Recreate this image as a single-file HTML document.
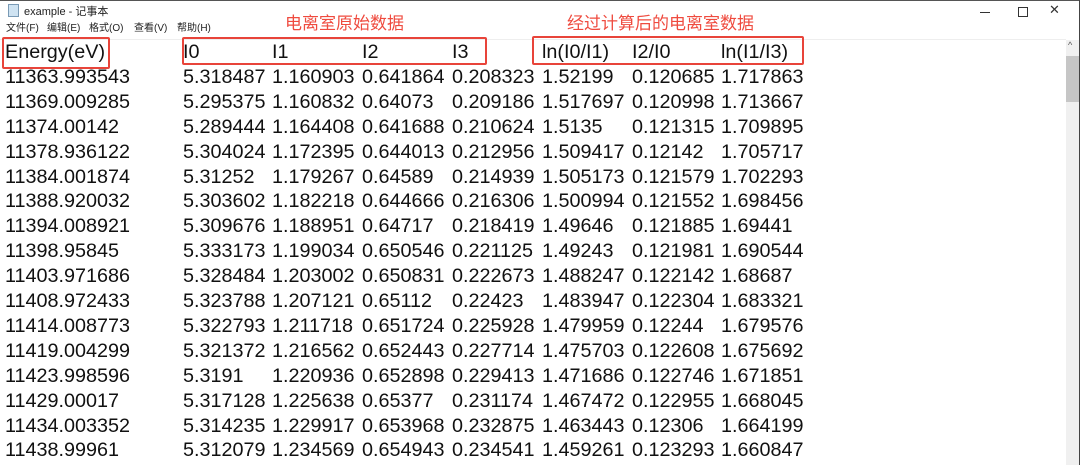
<!DOCTYPE html>
<html><head><meta charset="utf-8"><style>
*{margin:0;padding:0;box-sizing:border-box}
body{width:1080px;height:465px;overflow:hidden;background:#fff;position:relative;font-family:"Liberation Sans","Noto Sans CJK SC",sans-serif;color:#111}
.t{position:absolute;white-space:nowrap}
.row{position:absolute;left:0;height:25px;font-size:19.8px;line-height:25px}
.row span{position:absolute;top:0}
.box{position:absolute;border:2px solid #e8443a;border-radius:2px}
.red{color:#ef4b3f;font-size:17px}
.m{position:absolute;top:22px;font-size:10px;line-height:14px;color:#222;white-space:nowrap}
</style></head><body>
<div style="position:absolute;left:0;top:0;width:1080px;height:1px;background:#555"></div>
<div style="position:absolute;left:8px;top:4px;width:11px;height:13px;background:#cfe3f2;border:1px solid #7a9ab5"></div>
<div class="t" style="left:24px;top:3px;font-size:11px;color:#222">example - 记事本</div>
<div style="position:absolute;left:980px;top:12px;width:10px;height:1px;background:#333"></div>
<div style="position:absolute;left:1018px;top:7px;width:10px;height:10px;border:1px solid #333"></div>
<div class="t" style="left:1049px;top:2px;font-size:13px;color:#333">✕</div>
<div class="m" style="left:6px">文件(F)</div>
<div class="m" style="left:47px">编辑(E)</div>
<div class="m" style="left:89px">格式(O)</div>
<div class="m" style="left:134px">查看(V)</div>
<div class="m" style="left:177px">帮助(H)</div>
<div style="position:absolute;left:0;top:39px;width:1066px;height:1px;background:#eee"></div>
<div class="t red" style="left:285px;top:9px">电离室原始数据</div>
<div class="t red" style="left:567px;top:9px">经过计算后的电离室数据</div>
<div style="position:absolute;left:1066px;top:40px;width:13px;height:425px;background:#f0f0f0"></div>
<div style="position:absolute;left:1066px;top:56px;width:13px;height:46px;background:#c6c6c6"></div>
<div class="t" style="left:1068px;top:40px;font-size:9px;color:#555">^</div>
<div style="position:absolute;left:1079px;top:0;width:1px;height:465px;background:#444"></div>
<div id="d"></div>
<div class="box" style="left:2px;top:37px;width:108px;height:32px"></div>
<div class="box" style="left:182px;top:37px;width:305px;height:28px"></div>
<div class="box" style="left:532px;top:36px;width:272px;height:29px"></div>
<script>
var xs=[5,183,272,362,452,542,632,721];
var rows=[["Energy(eV)","I0","I1","I2","I3","ln(I0/I1)","I2/I0","ln(I1/I3)"],
["11363.993543","5.318487","1.160903","0.641864","0.208323","1.52199","0.120685","1.717863"],
["11369.009285","5.295375","1.160832","0.64073","0.209186","1.517697","0.120998","1.713667"],
["11374.00142","5.289444","1.164408","0.641688","0.210624","1.5135","0.121315","1.709895"],
["11378.936122","5.304024","1.172395","0.644013","0.212956","1.509417","0.12142","1.705717"],
["11384.001874","5.31252","1.179267","0.64589","0.214939","1.505173","0.121579","1.702293"],
["11388.920032","5.303602","1.182218","0.644666","0.216306","1.500994","0.121552","1.698456"],
["11394.008921","5.309676","1.188951","0.64717","0.218419","1.49646","0.121885","1.69441"],
["11398.95845","5.333173","1.199034","0.650546","0.221125","1.49243","0.121981","1.690544"],
["11403.971686","5.328484","1.203002","0.650831","0.222673","1.488247","0.122142","1.68687"],
["11408.972433","5.323788","1.207121","0.65112","0.22423","1.483947","0.122304","1.683321"],
["11414.008773","5.322793","1.211718","0.651724","0.225928","1.479959","0.12244","1.679576"],
["11419.004299","5.321372","1.216562","0.652443","0.227714","1.475703","0.122608","1.675692"],
["11423.998596","5.3191","1.220936","0.652898","0.229413","1.471686","0.122746","1.671851"],
["11429.00017","5.317128","1.225638","0.65377","0.231174","1.467472","0.122955","1.668045"],
["11434.003352","5.314235","1.229917","0.653968","0.232875","1.463443","0.12306","1.664199"],
["11438.99961","5.312079","1.234569","0.654943","0.234541","1.459261","0.123293","1.660847"]];
var h="";
rows.forEach(function(r,i){h+='<div class="row" style="top:'+(40+i*24.9)+'px">';
r.forEach(function(c,j){h+='<span style="left:'+xs[j]+'px">'+c+'</span>'});h+='</div>'});
document.getElementById('d').innerHTML=h;
</script>
</body></html>
